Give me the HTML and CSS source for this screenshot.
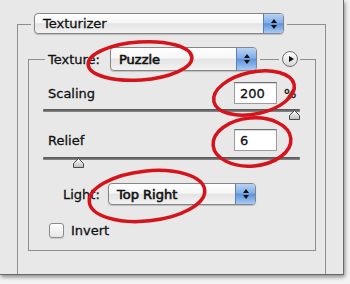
FILE: index.html
```html
<!DOCTYPE html>
<html>
<head>
<meta charset="utf-8">
<link rel="stylesheet" href="styles.css">
</head>
<body>
<div class="dialog">
  <div class="group outer">
    <div class="outer-head">
      <div class="select sel-texturizer"><span class="sel-text">Texturizer</span><span class="stepper"><i class="up"></i><i class="down"></i></span></div>
    </div>
    <div class="group inner">
      <div class="inner-head">
        <span class="head-label">Texture:</span>
        <div class="select sel-puzzle"><span class="sel-text strong">Puzzle</span><span class="stepper"><i class="up"></i><i class="down"></i></span></div>
        <span class="head-line grow"></span>
        <span class="round-btn"><i class="play"></i></span>
        <span class="head-line end"></span>
      </div>

      <div class="row-input">
        <span class="row-label">Scaling</span>
        <span class="num-input">200</span>
        <span class="unit">%</span>
      </div>
      <div class="slider">
        <div class="track"></div>
        <svg class="thumb" style="left:245px" width="13" height="12" viewBox="0 0 13 12"><defs><linearGradient id="tg1" x1="0" y1="0" x2="0" y2="1"><stop offset="0" stop-color="#ffffff"/><stop offset="1" stop-color="#bdbdbd"/></linearGradient></defs><polygon points="1.5,6.5 6.5,1.5 11.5,6.5 11.5,10.5 1.5,10.5" fill="url(#tg1)" stroke="#4a4a4a" stroke-width="1"/></svg>
      </div>

      <div class="row-input relief">
        <span class="row-label">Relief</span>
        <span class="num-input">6</span>
        <span class="unit"></span>
      </div>
      <div class="slider second">
        <div class="track"></div>
        <svg class="thumb" style="left:29px" width="13" height="12" viewBox="0 0 13 12"><defs><linearGradient id="tg2" x1="0" y1="0" x2="0" y2="1"><stop offset="0" stop-color="#ffffff"/><stop offset="1" stop-color="#bdbdbd"/></linearGradient></defs><polygon points="1.5,6.5 6.5,1.5 11.5,6.5 11.5,10.5 1.5,10.5" fill="url(#tg2)" stroke="#4a4a4a" stroke-width="1"/></svg>
      </div>

      <div class="row-light">
        <span class="light-label">Light:</span>
        <div class="select sel-light"><span class="sel-text strong">Top Right</span><span class="stepper"><i class="up"></i><i class="down"></i></span></div>
      </div>

      <div class="row-check">
        <span class="checkbox"></span>
        <span class="check-label">Invert</span>
      </div>
    </div>
  </div>
</div>

<svg class="annotations" width="350" height="284" viewBox="0 0 350 284">
  <ellipse cx="140" cy="61" rx="52" ry="19" transform="rotate(-4 140 61)"/>
  <ellipse cx="254" cy="93" rx="41" ry="21" transform="rotate(-12 254 93)"/>
  <ellipse cx="252" cy="142" rx="39" ry="24" transform="rotate(-5 252 142)"/>
  <ellipse cx="147" cy="196" rx="58" ry="25" transform="rotate(-6 147 196)"/>
</svg>
</body>
</html>
```

FILE: styles.css
```css
* { box-sizing: border-box; }
html, body { margin: 0; padding: 0; }
body {
  width: 350px;
  height: 284px;
  overflow: hidden;
  background: #f3f3f3;
  font-family: "DejaVu Sans", sans-serif;
  font-size: 13px;
  color: #111;
  -webkit-text-stroke: 0.3px #111;
  position: relative;
}

.dialog {
  width: 344px;
  height: 275px;
  background: #e8e8e8;
  border-right: 1px solid #6a6a6a;
  border-bottom: 1px solid #6a6a6a;
  box-shadow: 1px 2px 4px rgba(0,0,0,0.45);
  padding: 24px 0 0 17px;
  overflow: hidden;
}

.group { border: 1px solid #8e8e8e; }
.outer {
  width: 309px;
  height: 270px;
  border-bottom: none;
}
.outer-head {
  display: flex;
  width: 256px;
  margin: -12px 0 0 13px;
  padding: 0 3px;
  background: #e8e8e8;
}

.select {
  display: flex;
  align-items: stretch;
  height: 22px;
  border: 1px solid #858585;
  border-radius: 4px;
  background: linear-gradient(#ffffff 0%, #f6f6f6 45%, #e4e4e4 52%, #f2f2f2 100%);
  box-shadow: 0 1px 1px rgba(0,0,0,0.18);
}
.sel-texturizer { width: 250px; height: 21px; }
.sel-text {
  flex: 1;
  display: flex;
  align-items: center;
  padding-left: 8px;
  white-space: nowrap;
}
.strong { -webkit-text-stroke: 0.6px #111; }
.stepper {
  width: 20px;
  border-left: 1px solid #5d7fb3;
  border-radius: 0 3px 3px 0;
  background: linear-gradient(#b8d3f4 0%, #82aeea 45%, #5f93dc 52%, #a7cbf5 100%);
  display: flex;
  flex-direction: column;
  align-items: center;
  justify-content: center;
  gap: 2px;
}
.stepper .up {
  width: 0; height: 0;
  border-left: 3px solid transparent;
  border-right: 3px solid transparent;
  border-bottom: 4px solid #111;
}
.stepper .down {
  width: 0; height: 0;
  border-left: 3px solid transparent;
  border-right: 3px solid transparent;
  border-top: 4px solid #111;
}

.inner {
  width: 288px;
  height: 192px;
  margin: 25px 0 0 10px;
}
.inner-head {
  display: flex;
  align-items: flex-start;
  height: 24px;
  margin: -13px 0 0 16px;
  padding-left: 3px;
  background: #e8e8e8;
}
.head-label {
  width: 62px;
  height: 24px;
  display: flex;
  align-items: center;
}
.sel-puzzle { width: 147px; height: 24px; }
.head-line {
  height: 1px;
  margin-top: 12px;
  background: #8e8e8e;
}
.head-line.grow { flex: 1; margin-left: 3px; margin-right: 3px; }
.head-line.end { width: 15px; margin-left: 2px; }
.round-btn {
  width: 16px;
  height: 16px;
  margin-top: 4px;
  border: 1px solid #6e6e6e;
  border-radius: 50%;
  background: linear-gradient(#ffffff, #d6d6d6);
  display: flex;
  align-items: center;
  justify-content: center;
  padding-left: 2px;
}
.play {
  width: 0; height: 0;
  border-top: 3.5px solid transparent;
  border-bottom: 3.5px solid transparent;
  border-left: 5px solid #111;
}

.row-input {
  display: flex;
  align-items: center;
  height: 22px;
  margin-top: 11px;
  padding-left: 19px;
}
.row-input.relief { margin-top: 8px; }
.row-label { flex: 1; }
.num-input {
  width: 43px;
  height: 22px;
  background: #fff;
  border: 1px solid #9c9c9c;
  border-top-color: #6f6f6f;
  box-shadow: inset 0 1px 1px rgba(0,0,0,0.15);
  padding-left: 5px;
  display: flex;
  align-items: center;
}
.unit { width: 38px; padding-left: 7px; }

.slider {
  position: relative;
  width: 257px;
  height: 12px;
  margin: 3px 0 0 14px;
}
.slider.second { margin-top: 6px; }
.track {
  margin-top: 5px;
  height: 3px;
  border-radius: 1px;
  background: linear-gradient(#4f4f4f, #8a8a8a);
}
.thumb { position: absolute; top: 0; }

.row-light {
  display: flex;
  align-items: center;
  height: 22px;
  margin-top: 14px;
  padding-left: 34px;
}
.light-label { width: 45px; }
.sel-light { width: 148px; height: 22px; }

.row-check {
  display: flex;
  align-items: center;
  margin-top: 18px;
  padding-left: 20px;
  height: 15px;
}
.checkbox {
  width: 15px;
  height: 15px;
  border: 1px solid #8a8a8a;
  border-radius: 3px;
  background: linear-gradient(#ffffff, #e6e6e6);
  box-shadow: 0 1px 1px rgba(0,0,0,0.12);
}
.check-label { margin-left: 7px; }

.annotations {
  position: absolute;
  left: 0;
  top: 0;
  pointer-events: none;
}
.annotations ellipse {
  fill: none;
  stroke: #d6121a;
  stroke-width: 3.5;
}
```
